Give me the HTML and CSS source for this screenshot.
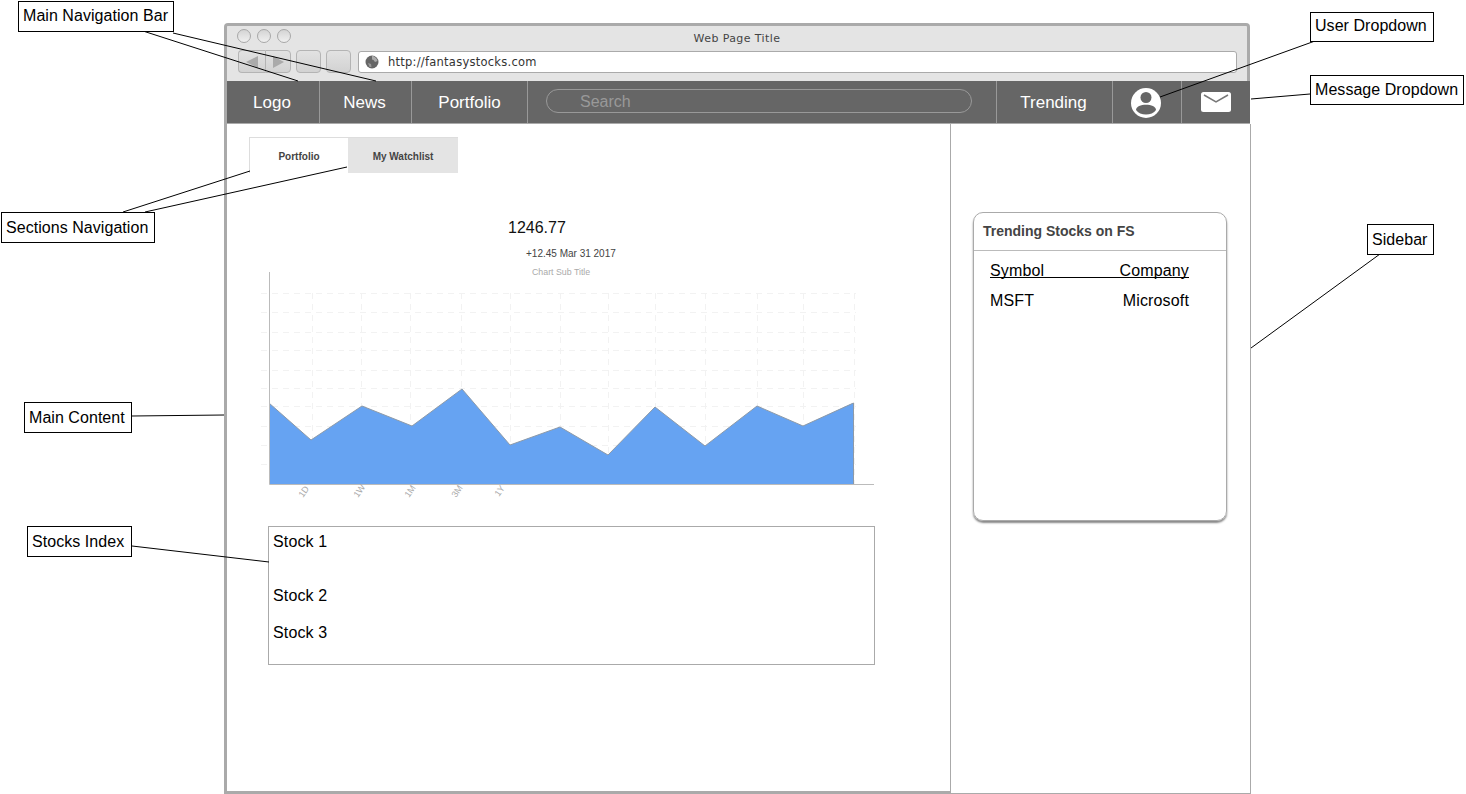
FILE: index.html
```html
<!DOCTYPE html>
<html lang="en">
<head>
  <meta charset="UTF-8" />
  <title>Fantasy Stocks Wireframe</title>
  <link rel="stylesheet" href="styles.css">
</head>
<body>

  <div class="window">
    <div class="titlebar">
      <div class="lights">
        <span class="light"></span>
        <span class="light"></span>
        <span class="light"></span>
        <span class="window-title">Web Page Title</span>
      </div>
      <div class="toolbar">
        <div class="btn-group">
          <span class="tool-btn back"><svg width="14" height="12" viewBox="0 0 14 12"><path d="M13 0V12L1 6Z" fill="#aaa"/></svg></span>
          <span class="tool-btn forward"><svg width="14" height="12" viewBox="0 0 14 12"><path d="M2 0V12L13 6Z" fill="#aaa"/></svg></span>
        </div>
        <span class="tool-btn single"></span>
        <span class="tool-btn single"></span>
        <div class="address">
          <svg class="globe" width="14" height="14" viewBox="0 0 14 14">
            <circle cx="7" cy="7" r="6.500" fill="#666"/>
            <path d="M7 1C9 1 12 3 12.500 6L10 7 8.500 5 7 4.500Z" fill="#aaa"/>
            <path d="M3 8L6 9 6.500 12 4.500 12Z" fill="#999"/>
          </svg>
          <span>http://fantasystocks.com</span>
        </div>
      </div>
    </div>

    <nav class="navbar">
      <a class="nav-item logo">Logo</a>
      <a class="nav-item news">News</a>
      <a class="nav-item portfolio">Portfolio</a>
      <div class="search-wrap">
        <div class="search">Search</div>
      </div>
      <a class="nav-item trending">Trending</a>
      <a class="nav-item user">
        <svg width="30" height="30" viewBox="0 0 30 30">
          <circle cx="15" cy="15" r="15" fill="#fff"/>
          <circle cx="15" cy="9.500" r="5.500" fill="#666"/>
          <path d="M5 22C5 18.500 10 16.700 15 16.700S25 18.500 25 22C23 25 19 26.500 15 26.500S7 25 5 22Z" fill="#666"/>
        </svg>
      </a>
      <a class="nav-item mail">
        <svg width="30" height="20" viewBox="0 0 30 20">
          <rect width="30" height="20" rx="2.500" fill="#fff"/>
          <path d="M3 3L15 10 27 3" fill="none" stroke="#777" stroke-width="1.500"/>
        </svg>
      </a>
    </nav>

    <div class="page">
      <main class="content">
        <div class="tabs">
          <div class="tab active">Portfolio</div>
          <div class="tab">My Watchlist</div>
        </div>

        <div class="price">1246.77</div>
        <div class="change">+12.45 Mar 31 2017</div>
        <div class="chart-sub">Chart Sub Title</div>

        <svg class="chart" width="620" height="228" viewBox="255 272 620 228">
          <g class="grid">
            <path d="M261 293.500H856M261 312.500H856M261 332.500H856M261 350.500H856M261 370.500H856M261 388.500H856M261 406.500H856M261 426.500H856M261 445.500H856M261 464.500H856"/>
            <path d="M312.500 293V484M361.500 293V484M410.500 293V484M461.500 293V484M510.500 293V484M560.500 293V484M608.500 293V484M655.500 293V484M705.500 293V484M757.500 293V484M803.500 293V484M854.500 293V484"/>
          </g>
          <polygon class="area" points="269,403 311,440 362,406 412,426 462,389 510,445 560,427 608,455 655,407 705,446 757,406 803,426 853,403 853,484 269,484"/>
          <path class="area-edge" d="M269 403L311 440 362 406 412 426 462 389 510 445 560 427 608 455 655 407 705 446 757 406 803 426 853.500 403V484"/>
          <path class="axis" d="M269.500 272V484.500H874"/>
          <g class="tick-labels">
            <text transform="translate(303,498) rotate(-55)">1D</text>
            <text transform="translate(358,498) rotate(-55)">1W</text>
            <text transform="translate(409,498) rotate(-55)">1M</text>
            <text transform="translate(456,498) rotate(-55)">3M</text>
            <text transform="translate(499,497) rotate(-55)">1Y</text>
          </g>
        </svg>

        <section class="stocks">
          <div class="stock first">Stock 1</div>
          <div class="stock second">Stock 2</div>
          <div class="stock third">Stock 3</div>
        </section>
      </main>

      <aside class="sidebar">
        <div class="card">
          <div class="card-title">Trending Stocks on FS</div>
          <div class="card-body">
            <div class="row head"><span>Symbol</span><span>Company</span></div>
            <div class="row"><span>MSFT</span><span>Microsoft</span></div>
          </div>
        </div>
      </aside>
    </div>
  </div>

  <!-- callout leader lines -->
  <svg class="leaders" width="1466" height="794" viewBox="0 0 1466 794">
    <path d="M143 31L298 81M173 33L376 81"/>
    <path d="M1315 41L1160 97"/>
    <path d="M1310 94L1251 99"/>
    <path d="M123 212L250 171M145 212L347 167"/>
    <path d="M1380 254L1251 348"/>
    <path d="M132 416L224 415"/>
    <path d="M132 546L269 562"/>
  </svg>

  <div class="callout c-nav">Main Navigation Bar</div>
  <div class="callout c-user">User Dropdown</div>
  <div class="callout c-msg">Message Dropdown</div>
  <div class="callout c-sections">Sections Navigation</div>
  <div class="callout c-sidebar">Sidebar</div>
  <div class="callout c-main">Main Content</div>
  <div class="callout c-stocks">Stocks Index</div>

</body>
</html>
```

FILE: styles.css
```css
/* Wireframe canvas */
body {
  margin: 0;
  width: 1466px;
  height: 794px;
  overflow: hidden;
  position: relative;
  background: #fff;
  font-family: 'Liberation Sans', Arial, sans-serif;
  color: #000;
}

.window {
  position: absolute;
  left: 224px;
  top: 23px;
  width: 1027px;
  height: 771px;
  box-sizing: border-box;
  display: flex;
  flex-direction: column;
}

/* Browser chrome */
.titlebar {
  height: 58px;
  box-sizing: border-box;
  background: #e4e4e4;
  border: solid #aaa;
  border-width: 3px 3px 0 3px;
  border-radius: 4px 4px 0 0;
  padding: 3px 10px 0 10px;
  margin-right: 1px;
}

.lights {
  display: flex;
  gap: 6px;
  height: 21px;
  position: relative;
}

.light {
  width: 14px;
  height: 14px;
  box-sizing: border-box;
  border: 1px solid #a8a8a8;
  border-radius: 50%;
  background: linear-gradient(#d4d4d4, #f0f0f0);
}

.window-title {
  position: absolute;
  left: 0;
  right: 0;
  top: 3px;
  text-align: center;
  font-family: 'DejaVu Sans', sans-serif;
  font-size: 11px;
  letter-spacing: 0.4px;
  color: #444;
}

.toolbar {
  display: flex;
  align-items: center;
  gap: 5px;
  height: 23px;
  margin-left: 1px;
}

.btn-group {
  display: flex;
}

.tool-btn {
  width: 27px;
  height: 23px;
  box-sizing: border-box;
  border: 1px solid #b4b4b4;
  border-radius: 4px;
  background: linear-gradient(#e2e2e2, #d2d2d2);
  display: flex;
  align-items: center;
  justify-content: center;
}

.tool-btn.back {
  border-radius: 4px 0 0 4px;
  border-right: none;
}

.tool-btn.forward {
  width: 26px;
  border-radius: 0 4px 4px 0;
}

.tool-btn.single {
  width: 25px;
}

.address {
  flex: 1;
  height: 22px;
  box-sizing: border-box;
  margin-left: 2px;
  background: #fff;
  border: 1px solid #aaa;
  border-radius: 3px;
  display: flex;
  align-items: center;
  gap: 9px;
  padding-left: 6px;
  font-family: 'DejaVu Sans', sans-serif;
  font-size: 11.500px;
  letter-spacing: 0.25px;
  color: #333;
}

/* Main nav */
.navbar {
  height: 43px;
  flex-shrink: 0;
  box-sizing: border-box;
  background: #666;
  border-left: 3px solid #aaa;
  border-bottom: 1px solid #aaa;
  margin-right: 1px;
  display: flex;
  color: #fff;
  font-size: 17px;
}

.nav-item {
  display: flex;
  align-items: center;
  justify-content: center;
  box-sizing: border-box;
  padding-top: 1px;
  border-right: 1px solid #999;
}

.logo { width: 93px; padding-right: 2px; }
.news { width: 92px; padding-right: 2px; }
.portfolio { width: 116px; }
.trending { width: 117px; padding-right: 2px; border-left: 1px solid #999; }
.user { width: 69px; padding-right: 2px; }
.mail { width: 68px; padding-bottom: 2px; border-right: none; }

.search-wrap {
  flex: 1;
  display: flex;
  align-items: center;
  padding: 0 24px 2px 18px;
}

.search {
  flex: 1;
  height: 24px;
  box-sizing: border-box;
  border: 1px solid #999;
  border-radius: 12px;
  padding-left: 33px;
  line-height: 24px;
  font-size: 16px;
  color: #999;
}

/* Page body */
.page {
  flex: 1;
  display: flex;
  min-height: 0;
}

.content {
  width: 727px;
  box-sizing: border-box;
  border-left: 3px solid #aaa;
  border-bottom: 3px solid #aaa;
  border-right: 1px solid #aaa;
  padding: 13px 0 0 22px;
}

.tabs {
  display: flex;
  width: 209px;
  height: 36px;
  box-sizing: border-box;
  border-top: 1px solid #ddd;
  border-left: 1px solid #ddd;
  font-size: 10px;
  font-weight: 700;
  color: #444;
}

.tab {
  width: 110px;
  padding-top: 1px;
  display: flex;
  align-items: center;
  justify-content: center;
  background: #e4e4e4;
}

.tab.active {
  width: 98px;
  background: #fff;
}

.price {
  margin: 46px 0 0 259px;
  font-size: 16px;
  line-height: 18px;
  color: #111;
}

.change {
  margin: 11px 0 0 277px;
  font-size: 10px;
  line-height: 12px;
  color: #444;
}

.chart-sub {
  margin: 6px 0 0 283px;
  font-size: 8.800px;
  line-height: 12px;
  color: #aaa;
}

.chart {
  display: block;
  margin: -6px 0 0 6px;
}

.grid path {
  fill: none;
  stroke: #f2f2f2;
  stroke-width: 1;
  stroke-dasharray: 6 5;
}

.area {
  fill: #66a3f2;
}

.area-edge {
  fill: none;
  stroke: #8d9aa8;
  stroke-width: 1;
}

.axis {
  fill: none;
  stroke: #bbb;
  stroke-width: 1;
}

.tick-labels text {
  font-size: 9px;
  fill: #aaa;
}

.stocks {
  width: 607px;
  height: 139px;
  box-sizing: border-box;
  margin: 26px 0 0 19px;
  border: 1px solid #aaa;
  padding-left: 4px;
  font-size: 16px;
  letter-spacing: 0.15px;
}

.stock { line-height: 20px; }
.first { margin-top: 5px; }
.second { margin-top: 34px; }
.third { margin-top: 17px; }

/* Sidebar */
.sidebar {
  flex: 1;
  box-sizing: border-box;
  border-right: 1px solid #aaa;
  border-bottom: 1px solid #aaa;
  padding: 88px 23px 0 22px;
}

.card {
  height: 309px;
  box-sizing: border-box;
  border: 1px solid #aaa;
  border-radius: 10px;
  box-shadow: 0 2px 2px #888;
}

.card-title {
  height: 38px;
  box-sizing: border-box;
  border-bottom: 1px solid #bbb;
  padding-left: 9px;
  line-height: 37px;
  font-size: 14px;
  font-weight: 700;
  color: #444;
}

.card-body {
  padding: 12px 37px 0 16px;
  font-size: 16px;
  letter-spacing: 0.15px;
}

.row {
  display: flex;
  justify-content: space-between;
  line-height: 18px;
}

.row.head {
  height: 14px;
  border-bottom: 1px solid #000;
  line-height: 16px;
  margin-bottom: 14px;
}

/* Callouts */
.leaders {
  position: absolute;
  left: 0;
  top: 0;
}

.leaders path {
  fill: none;
  stroke: #000;
  stroke-width: 1;
}

.callout {
  position: absolute;
  box-sizing: border-box;
  height: 31px;
  border: 1px solid #000;
  background: #fff;
  padding-left: 4px;
  font-size: 16px;
  line-height: 30px;
  letter-spacing: 0.05px;
  white-space: nowrap;
}

.c-nav { left: 18px; top: 1px; width: 156px; line-height: 28px; }
.c-user { left: 1310px; top: 12px; width: 124px; height: 30px; line-height: 26px; }
.c-msg { left: 1310px; top: 75px; width: 154px; height: 30px; line-height: 28px; }
.c-sections { left: 1px; top: 212px; width: 154px; }
.c-sidebar { left: 1367px; top: 224px; width: 67px; }
.c-main { left: 24px; top: 402px; width: 108px; }
.c-stocks { left: 27px; top: 526px; width: 105px; }
```
